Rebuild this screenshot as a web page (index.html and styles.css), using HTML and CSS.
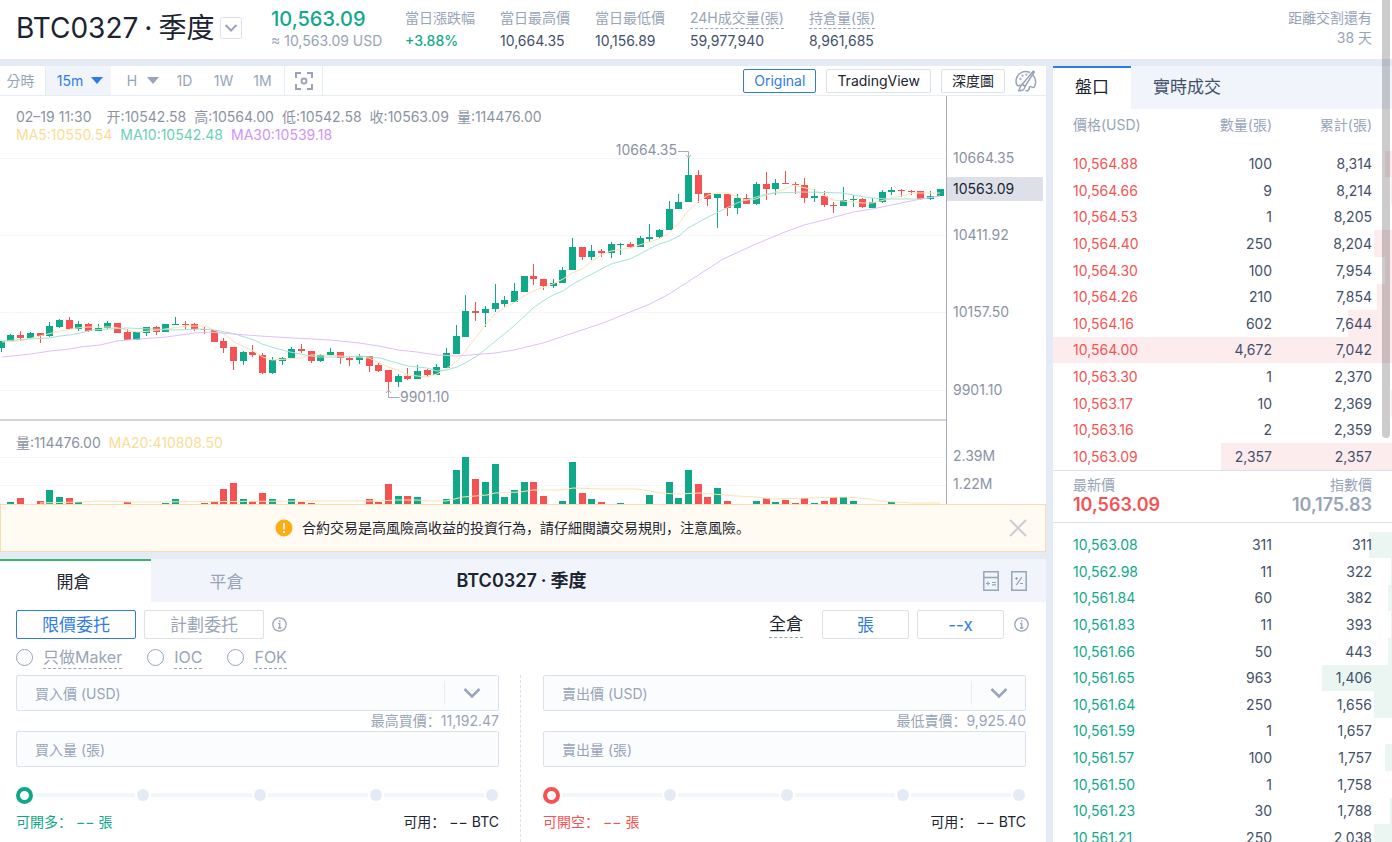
FILE: index.html
```html
<!DOCTYPE html>
<html lang="zh-Hant">
<head>
<meta charset="utf-8">
<title>BTC0327·季度</title>
<link rel="stylesheet" href="styles.css">
</head>
<body>
<div class="app">
  <header class="ticker">
    <div class="pair">
      <h1 class="pair-name">BTC0327<span class="sep">·</span>季度</h1>
      <button class="pair-toggle" aria-label="選擇合約"><svg width="14" height="10" viewBox="0 0 14 10"><path d="M1.500 2l5.500 5.500L12.500 2" fill="none" stroke="#98a4b8" stroke-width="2"/></svg></button>
    </div>
    <div class="last">
      <strong class="last-price">10,563.09</strong>
      <span class="last-usd">≈ 10,563.09 USD</span>
    </div>
    <dl class="stats">
      <div class="stat"><dt>當日漲跌幅</dt><dd class="up">+3.88%</dd></div>
      <div class="stat"><dt>當日最高價</dt><dd>10,664.35</dd></div>
      <div class="stat"><dt>當日最低價</dt><dd>10,156.89</dd></div>
      <div class="stat hint"><dt>24H成交量(張)</dt><dd>59,977,940</dd></div>
      <div class="stat hint"><dt>持倉量(張)</dt><dd>8,961,685</dd></div>
    </dl>
    <div class="delivery"><span>距離交割還有</span><span>38 天</span></div>
  </header>

  <main class="workspace">
    <div class="left">
      <section class="chart-panel">
        <nav class="toolbar">
          <button class="tf tf-line">分時</button>
          <button class="tf tf-on">15m <i class="caret"></i></button>
          <button class="tf tf-h">H <i class="caret"></i></button>
          <button class="tf">1D</button>
          <button class="tf">1W</button>
          <button class="tf">1M</button>
          <button class="tf tf-shot" aria-label="全屏"><svg width="18" height="18" viewBox="0 0 18 18" fill="none" stroke="#98a4b8" stroke-width="2"><path d="M1 6V1h5M12 1h5v5M17 12v5h-5M6 17H1v-5"/><circle cx="9" cy="9" r="2.500"/></svg></button>
          <span class="grow"></span>
          <button class="view view-on">Original</button>
          <button class="view">TradingView</button>
          <button class="view">深度圖</button>
          <button class="brush" aria-label="設置"><svg width="22" height="22" viewBox="0 0 22 22" fill="none" stroke="#98a4b8" stroke-width="1.500" stroke-linejoin="round" stroke-linecap="round"><path d="M14.500 2.300C9 .2 3.200 2.800 1.600 8c-.8 2.600-.7 5.400.6 7.200.8 1 2 .8 2.800-.2"/><path d="M18.300 5.500c2.500 3 2.800 6.800 1.600 10.200-.8 2.300-2 2.200-3.200 1.300-1.300-.9-2.500-.2-2.500 1.200 0 1.700-1.200 2.600-3.200 2.600"/><path d="M7.300 14.200L18.200 1.300c.5-.4 1.200.1 1 .7L10 16.300z"/><path d="M7.300 14.200L10 16.300c.2 2.700-2 4.600-6.400 4.400 1.700-1.500 1-5.200 3.700-6.500z"/><circle cx="5.500" cy="9" r=".4"/><circle cx="7.500" cy="5.700" r=".4"/><circle cx="11.300" cy="4.600" r=".4"/></svg></button>
        </nav>
        <div class="chart">
          <div class="plot">
            <svg id="plot" class="plot-svg" viewBox="0 0 946 408" preserveAspectRatio="xMaxYMin slice"></svg>
            <div class="legend legend-price">
              <p class="ohlc"><span>02–19 11:30</span><span>开:10542.58</span><span>高:10564.00</span><span>低:10542.58</span><span>收:10563.09</span><span>量:114476.00</span></p>
              <p class="mas"><span class="ma5">MA5:10550.54</span><span class="ma10">MA10:10542.48</span><span class="ma30">MA30:10539.18</span></p>
            </div>
            <p class="legend legend-vol"><span>量:114476.00</span><span class="ma5">MA20:410808.50</span></p>
          </div>
          <div class="axis">
            <span class="tick tick-1">10664.35</span>
            <span class="tick tick-now">10563.09</span>
            <span class="tick tick-2">10411.92</span>
            <span class="tick tick-3">10157.50</span>
            <span class="tick tick-4">9901.10</span>
            <span class="tick tick-5">2.39M</span>
            <span class="tick tick-6">1.22M</span>
          </div>
        </div>
        <div class="notice" lang="zh-Hans">
          <svg width="18" height="18" viewBox="0 0 18 18"><circle cx="9" cy="9" r="8.500" fill="#ffab12"/><path d="M8 4h2l-.3 6.500H8.300zM8 12h2v2H8z" fill="#fff"/></svg>
          <p>合約交易是高風險高收益的投資行為，請仔細閱讀交易規則，注意風險。</p>
          <button class="close" aria-label="關閉"><svg width="18" height="18" viewBox="0 0 18 18"><path d="M1 1l16 16M17 1L1 17" stroke="#c9ced8" stroke-width="2"/></svg></button>
        </div>
      </section>

      <section class="trade">
        <div class="trade-head">
          <button class="side side-on">開倉</button>
          <button class="side">平倉</button>
          <h2 class="trade-title">BTC0327<span class="sep">·</span>季度</h2>
          <button class="tool" aria-label="計算器"><svg width="16" height="20" viewBox="0 0 16 20" fill="none" stroke="#98a4b8"><path d="M.8 .8h14.400v18.400H.8zM.8 6.500h14.400" stroke-width="1.500"/><path d="M3 12.500h4M5 10.500v4M9 11.500h4M9 13.800h4" stroke-width="1.200"/></svg></button>
          <button class="tool" aria-label="費率"><svg width="16" height="20" viewBox="0 0 16 20" fill="none" stroke="#98a4b8"><path d="M.8 .8h14.400v18.400H.8z" stroke-width="1.500"/><path d="M10.800 6.200l-5.500 8M4 7.500h3M5.500 6v3M9 12.500h3" stroke-width="1.200"/></svg></button>
        </div>
        <div class="modes">
          <button class="mode mode-on">限價委托</button>
          <button class="mode">計劃委托</button>
          <button class="info" aria-label="說明"><svg width="15" height="15" viewBox="0 0 15 15" fill="none" stroke="#98a4b8"><circle cx="7.500" cy="7.500" r="6.700" stroke-width="1.300"/><path d="M6.200 6.500h1.500V11M6 11h3.400M7 4h1.400" stroke-width="1.300"/></svg></button>
          <span class="grow"></span>
          <span class="margin">全倉</span>
          <button class="lever">張</button>
          <button class="lever">--x</button>
          <button class="info info-end" aria-label="說明"><svg width="15" height="15" viewBox="0 0 15 15" fill="none" stroke="#98a4b8"><circle cx="7.500" cy="7.500" r="6.700" stroke-width="1.300"/><path d="M6.200 6.500h1.500V11M6 11h3.400M7 4h1.400" stroke-width="1.300"/></svg></button>
        </div>
        <div class="options">
          <label class="opt"><input type="radio" name="tif"><span>只做Maker</span></label>
          <label class="opt"><input type="radio" name="tif"><span>IOC</span></label>
          <label class="opt"><input type="radio" name="tif"><span>FOK</span></label>
        </div>
        <div class="forms" lang="zh-Hans">
          <form class="order buy">
            <div class="field"><input type="text" placeholder="買入價 (USD)" aria-label="買入價"><button type="button" class="field-more" aria-label="更多"><svg width="18" height="12" viewBox="0 0 18 12"><path d="M1.500 2L9 9.500 16.500 2" fill="none" stroke="#98a4b8" stroke-width="2.500"/></svg></button></div>
            <p class="limit">最高買價：11,192.47</p>
            <div class="field"><input type="text" placeholder="買入量 (張)" aria-label="買入量"></div>
            <div class="slider"><i class="knob"></i><i class="seg"></i><i class="dot"></i><i class="seg"></i><i class="dot"></i><i class="seg"></i><i class="dot"></i><i class="seg"></i><i class="dot"></i></div>
            <div class="avail"><span class="can">可開多： −− 張</span><span>可用： −− BTC</span></div>
          </form>
          <form class="order sell">
            <div class="field"><input type="text" placeholder="賣出價 (USD)" aria-label="賣出價"><button type="button" class="field-more" aria-label="更多"><svg width="18" height="12" viewBox="0 0 18 12"><path d="M1.500 2L9 9.500 16.500 2" fill="none" stroke="#98a4b8" stroke-width="2.500"/></svg></button></div>
            <p class="limit">最低賣價：9,925.40</p>
            <div class="field"><input type="text" placeholder="賣出量 (張)" aria-label="賣出量"></div>
            <div class="slider"><i class="knob"></i><i class="seg"></i><i class="dot"></i><i class="seg"></i><i class="dot"></i><i class="seg"></i><i class="dot"></i><i class="seg"></i><i class="dot"></i></div>
            <div class="avail"><span class="can">可開空： −− 張</span><span>可用： −− BTC</span></div>
          </form>
        </div>
      </section>
    </div>

    <aside class="book">
      <div class="book-tabs">
        <button class="book-tab book-tab-on">盤口</button>
        <button class="book-tab">實時成交</button>
      </div>
      <table class="levels asks">
        <thead><tr><th>價格(USD)</th><th>數量(張)</th><th>累計(張)</th></tr></thead>
        <tbody id="asks"></tbody>
      </table>
      <div class="index">
        <div><span>最新價</span><strong class="down">10,563.09</strong></div>
        <div class="index-right"><span>指數價</span><strong>10,175.83</strong></div>
      </div>
      <table class="levels bids"><tbody id="bids"></tbody></table>
    </aside>
  </main>
  <div class="scroll-thumb"></div>
</div>
<script src="app.js"></script>
</body>
</html>
```
FILE: styles.css
```css
* { box-sizing: border-box; }
body, h1, h2, p, dl, dd { margin: 0; }
body { font-family: Inter, "Noto Sans CJK SC", sans-serif; font-size: 14px; line-height: 20px; color: #1b2430; background: #e4ebf5; }
button { font: inherit; color: inherit; background: none; border: 0; padding: 0; margin: 0; display: flex; align-items: center; justify-content: center; flex: none; cursor: pointer; }
svg { display: block; flex: none; }
.grow { flex: 1; }
.app { height: 100vh; overflow: hidden; display: flex; flex-direction: column; }

.ticker { flex: none; height: 59px; background: #fff; display: flex; padding: 0 20px 0 16px; color: #98a4b8; white-space: nowrap; }
.pair { display: flex; align-items: center; gap: 6px; width: 255px; height: 55px; color: #1b2430; }
.pair-name { font-size: 28px; line-height: 36px; font-weight: 400; }
.pair-name .sep { margin: 0 6px; }
.pair-toggle { width: 22px; height: 22px; border: 1px solid #dce2f0; border-radius: 2px; }
.last { display: flex; flex-direction: column; width: 134px; padding-top: 8px; }
.last-price { font-size: 20px; line-height: 23px; font-weight: 500; color: #11a88a; }
.last-usd { font-size: 14px; line-height: 20px; }
.stats { display: flex; gap: 25px; padding-top: 8px; }
.stat dt { line-height: 20px; }
.stat dd { margin-top: 3px; line-height: 20px; color: #43506a; }
.stat .up { color: #11a88a; font-weight: 500; }
.hint dt { border-bottom: 1px dashed #98a4b8; }
.hint dd { margin-top: 2px; }
.delivery { margin-left: auto; padding-top: 8px; display: flex; flex-direction: column; text-align: right; }

.workspace { flex: 1; min-height: 0; margin-top: 7px; display: grid; grid-template-columns: minmax(0, 1fr) 339px; gap: 7px; }
.left { min-width: 0; display: flex; flex-direction: column; gap: 7px; }
.chart-panel { background: #fff; }
.toolbar { height: 30px; display: flex; align-items: center; border-bottom: 1px solid #e6edf5; color: #98a4b8; padding-right: 9px; }
.tf { height: 29px; width: 39px; gap: 8px; }
.tf-line { width: 46px; padding-right: 4px; border-right: 1px solid #e6edf5; }
.tf-on { width: 65px; padding-left: 3px; color: #2f7be5; background: #f1f5fb; }
.tf-h { width: 54px; padding-left: 10px; gap: 10px; }
.tf-shot { margin-left: 2px; border-left: 1px solid #e6edf5; border-right: 1px solid #e6edf5; }
.caret { border: 6px solid transparent; border-top: 7px solid currentColor; border-bottom: 0; }
.view { height: 24px; padding: 0 10px; margin-right: 10px; border: 1px solid #dce0e8; border-radius: 2px; color: #1b2430; }
.view-on { color: #2f7be5; border-color: #2f7be5; }

.chart { display: flex; height: 408px; color: #8b93a3; }
.plot { flex: 1; min-width: 0; position: relative; }
.plot-svg { width: 100%; height: 408px; }
.legend { position: absolute; left: 16px; white-space: nowrap; }
.legend-price { top: 12px; line-height: 18px; }
.legend-vol { top: 337px; }
.legend span { margin-right: 8px; }
.legend .ohlc span:first-child { margin-right: 15px; }
.ma5 { color: #fbdc94; }
.ma10 { color: #6bd0b8; }
.ma30 { color: #cf95fa; }
.axis { width: 100px; position: relative; border-left: 1px solid #a5abb8; }
.tick { position: absolute; left: 0; padding-left: 6px; width: 96px; line-height: 24px; }
.tick-now { top: 81px; background: #dde0e8; color: #1b2430; }
.tick-1 { top: 50px; }
.tick-2 { top: 127px; }
.tick-3 { top: 204px; }
.tick-4 { top: 282px; }
.tick-5 { top: 348px; }
.tick-6 { top: 376px; }
.note { font-size: 14px; fill: #8b93a3; }

.notice { height: 48px; display: flex; align-items: center; gap: 9px; padding: 0 18px 0 274px; background: #fffbf3; border: 1px solid #f8dcb4; }
.notice p { flex: 1; }

.trade { flex: 1; background: #fff; }
.trade-head { display: flex; height: 43px; align-items: center; background: #f1f5fb; padding-right: 19px; }
.side { width: 151px; height: 43px; font-size: 17px; color: #98a4b8; border-top: 2px solid transparent; }
.side-on { color: #1b2430; background: #fff; border-color: #3cb371; padding-right: 4px; }
.trade-title { flex: 1; text-align: center; font-size: 18px; font-weight: 600; padding-right: 230px; }
.trade-title .sep { margin: 0 4px; }
.tool { margin-left: 12px; }
.modes { display: flex; align-items: center; padding: 8px 17px 0 16px; gap: 8px; }
.mode { width: 120px; height: 29px; border: 1px solid #dce0e8; border-radius: 2px; font-size: 17px; color: #98a4b8; }
.mode-on { color: #2f7be5; border-color: #2f7be5; }
.margin { font-size: 17px; line-height: 26px; margin-right: 11px; border-bottom: 1px dashed #98a4b8; }
.lever { width: 87px; height: 29px; border: 1px solid #dce0e8; border-radius: 2px; font-size: 17px; color: #2f7be5; }
.info-end { margin-left: 2px; }
.options { display: flex; gap: 25px; padding: 6px 16px 0; height: 36px; font-size: 16px; color: #98a4b8; }
.opt { display: flex; gap: 10px; height: 24px; align-items: center; }
.opt input { appearance: none; width: 17px; height: 17px; margin: 0; border: 1px solid #98a4b8; border-radius: 50%; }
.opt span { line-height: 22px; border-bottom: 1px dashed #98a4b8; }
.forms { display: grid; grid-template-columns: 1fr 1fr; padding: 0 20px 0 16px; }
.order.buy { padding-right: 21px; border-right: 1px dashed #dce0e8; }
.order.sell { padding-left: 22px; }
.field { display: flex; align-items: center; height: 36px; border: 1px solid #dce0e8; border-radius: 2px; background: #fbfcfe; }
.field input { flex: 1; min-width: 0; height: 34px; border: 0; background: none; padding: 0 18px; font: inherit; }
.field input::placeholder { color: #98a4b8; }
.field-more { width: 54px; height: 24px; border-left: 1px solid #e6edf5; }
.limit { text-align: right; line-height: 20px; color: #98a4b8; }
.slider { display: flex; align-items: center; gap: 2px; height: 18px; margin-top: 19px; padding-right: 1px; }
.knob { width: 17px; height: 17px; border: 4px solid #11a88a; border-radius: 50%; }
.sell .knob { border-color: #f55353; }
.dot { width: 12px; height: 12px; border-radius: 50%; background: #e4ebf5; }
.seg { flex: 1; height: 4px; background: #f1f6f9; }
.avail { display: flex; justify-content: space-between; margin-top: 8px; padding-bottom: 20px; }
.can { color: #11a88a; }
.sell .can { color: #f55353; }

.book { background: #fff; min-height: 0; overflow: hidden; }
.book-tabs { display: flex; height: 43px; background: #f1f5fb; font-size: 17px; color: #43506a; }
.book-tab { padding: 0 22px 4px; border-top: 2px solid transparent; }
.book-tab-on { background: #fff; color: #1b2430; border-color: #2f7be5; }
.levels { width: 100%; border-collapse: collapse; table-layout: fixed; color: #43506a; }
.levels th { height: 33px; padding: 0 0 1px; font-weight: 400; color: #98a4b8; text-align: right; }
.levels td { padding: 0; text-align: right; line-height: 20px; }
.levels th:first-child, .levels td:first-child { text-align: left; padding-left: 20px; }
.levels th:last-child, .levels td:last-child { padding-right: 20px; }
.levels th:nth-child(2), .levels td:nth-child(2) { padding-right: 7px; }
.levels tr { height: 26px; }
.asks thead::after { content: ""; display: block; height: 9px; }
.asks tbody { --tint: #fdecee; }
.bids tbody { --tint: #ebf6f3; }
.levels tbody tr { background: linear-gradient(to left, var(--tint) var(--depth), transparent var(--depth)); }
.levels tbody tr:nth-child(5n+2), .levels tbody tr:nth-child(5n+4), .levels tbody tr:nth-child(5n+5) { height: 27px; }
.asks td:first-child, .down { color: #f55353; }
.bids td:first-child { color: #11a88a; }
.index { display: flex; justify-content: space-between; height: 53px; padding: 4px 20px 0; border: solid #dce0e8; border-width: 1px 0; margin-bottom: 9px; color: #98a4b8; }
.index span, .index strong { display: block; line-height: 20px; }
.index strong { font-size: 18px; font-weight: 600; }
.index-right { text-align: right; }
.scroll-thumb { position: fixed; right: 2px; top: -8px; width: 8px; height: 446px; border-radius: 4px; background: rgba(0, 0, 0, .2); }
```
FILE: app.js
```js
// Candles: [direction, open/close top, open/close bottom, high, low, volume]
const candles = [
[1,341,348,341,352,0],[1,335,341,334,342,2],[0,335,338,331,341,6],[1,333,338,332,338,0],[0,333,336,333,343,3],
[1,326,336,322,337,14],[1,320,327,319,328,7],[0,320,329,317,330,6],[1,324,329,321,331,2],[0,324,331,323,332,0],
[1,328,331,324,331,0],[1,323,328,321,329,0],[0,323,333,323,333,0],[0,332,340,329,340,2],[1,332,340,332,340,0],
[1,327,333,327,336,0],[0,327,332,326,335,0],[1,324,332,324,332,1],[1,324,325,317,325,5],[0,324,325,321,329,0],
[0,324,329,323,331,0],[0,329,330,327,334,1],[0,330,342,330,342,3],[0,341,348,338,353,15],[0,347,361,347,370,21],
[1,352,361,351,365,5],[0,352,355,345,357,3],[0,355,373,353,374,11],[1,360,373,357,374,5],[1,358,361,357,365,0],
[1,349,358,347,358,5],[0,349,351,344,353,2],[0,351,361,351,363,1],[1,355,361,354,362,0],[1,352,355,348,356,0],
[0,352,358,352,364,0],[0,358,360,356,366,0],[1,356,360,354,364,0],[0,356,366,356,372,5],[0,365,371,363,372,2],
[0,370,382,370,390,20],[1,376,382,374,387,8],[0,376,379,368,380,8],[1,371,379,365,379,7],[0,370,375,369,377,0],
[1,367,375,364,375,0],[1,353,368,348,368,5],[1,336,354,325,354,34],[1,311,337,295,337,47],[0,311,313,302,321,25],
[1,309,313,306,327,22],[1,303,309,284,312,40],[1,300,304,296,307,7],[1,291,302,283,302,14],[1,276,292,276,292,22],
[0,276,279,264,285,22],[0,279,286,279,290,8],[1,283,286,279,288,0],[1,270,283,267,283,3],[1,247,270,238,270,42],
[0,247,257,247,260,11],[1,251,257,245,260,5],[0,251,253,249,257,2],[1,244,253,242,258,0],[1,244,245,243,255,1],
[0,244,247,242,248,0],[1,238,247,236,247,0],[1,237,239,224,242,9],[1,230,237,229,238,0],[1,209,230,201,230,22],
[1,202,209,194,209,6],[1,175,202,158,202,34],[0,175,194,170,203,20],[0,193,199,193,206,7],[1,194,198,194,228,16],
[0,194,208,194,216,3],[1,198,208,194,214,0],[0,198,204,194,204,0],[1,184,204,182,205,3],[0,184,189,172,200,6],
[1,183,189,179,195,2],[0,183,184,171,184,4],[0,184,185,182,194,1],[0,185,198,178,203,6],[1,196,198,189,202,1],
[0,196,205,191,207,3],[0,205,206,202,213,7],[1,200,206,187,206,7],[1,199,200,195,207,3],[0,199,207,198,208,0],
[1,202,208,198,208,0],[1,192,202,190,203,0],[1,190,192,187,195,2],[0,190,191,189,197,0],[0,191,192,190,195,0],
[0,191,199,191,200,0],[1,196,199,191,200,0],[1,189,196,189,196,0]];
const lines = [
['#fbe3b0','2,342 20,341 40,336 60,331 77,328 88,327 113,327 137,332 150,331 173,328 187,326 205,326 214,330 224,334 234,342 253,351 263,357 272,360 302,358 311,355 321,355 340,356 359,357 369,358 388,367 398,370 408,375 427,377 437,374 446,369 457,361 466,350 477,336 487,323 495,314 505,307 514,303 524,296 533,291 553,284 563,279 572,273 582,269 592,261 601,255 611,251 630,248 649,242 659,239 669,233 679,223 688,211 698,202 708,195 717,193 727,193 746,200 756,199 766,195 785,189 793,185 814,190 833,200 843,201 863,203 872,203 901,196 913,193 940,193'],
['#a5e2d5','2,341 30,339 50,338 60,336 70,335 80,333 92,330 108,329 127,328 175,330 200,329 215,330 235,334 254,340 262,344 275,348 290,352 305,355 318,357 345,357 360,356 380,358 390,361 408,366 427,368 437,371 447,370 457,367 467,362 477,356 487,348 514,326 533,308 543,301 553,295 563,291 573,284 592,274 611,264 630,259 640,254 649,249 659,244 669,241 679,236 688,228 708,217 737,203 746,200 763,195 775,193 803,192 843,193 853,195 872,198 887,199 921,199 940,196'],
['#dfc0fb','2,357 31,354 50,351 70,349 80,347 100,345 117,341 127,340 166,337 195,333 210,332 233,334 260,336 293,338 330,340 359,343 379,346 398,350 417,352 437,355 457,356 495,353 514,350 543,343 573,333 603,323 650,304 669,294 700,274 723,259 756,244 785,232 804,225 824,220 853,212 872,209 901,203 921,199 940,196'],
['#fbe3b0','40,503 77,502 100,501 133,502 320,501 377,501 397,500 417,500 430,501 446,501 463,497 487,495 495,493 520,492 533,490 563,490 573,488 603,489 637,489 650,491 660,493 677,494 700,493 737,496 757,497 770,499 847,497 870,499 880,501 913,503 940,503']];
const top0 = 96;
const step = 939 / 97;
const colors = ['#f55353', '#11a88a'];
let out = '';
for (const y of [158, 235, 312, 390, 457, 485]) out += `<path d="M0 ${y - top0 + .5}H946" stroke="#f4f5f8"/>`;
candles.forEach(([up, a, b, hi, lo, vol], i) => {
  const x = Math.floor(1.3 + i * step);
  const c = colors[up];
  out += `<path d="M${x + .5} ${hi - top0}V${lo - top0}" stroke="${c}"/><rect x="${x - 3}" y="${a - top0}" width="7" height="${b - a}" fill="${c}"/>`;
  if (vol) out += `<rect x="${x - 3}" y="${408 - vol}" width="7" height="${vol}" fill="${c}"/>`;
});
for (const [c, pts] of lines) out += `<polyline transform="translate(0 ${-top0})" points="${pts}" fill="none" stroke="${c}"/>`;
out += '<path d="M0 324H946" stroke="#c3c7d1" stroke-width="1.500"/>';
out += '<path d="M678 55.500h10.500v6M686 59l2.500 3 2.500-3M388.500 294v7.500h11M386 297l2.500-3 2.500 3" fill="none" stroke="#a5abb8"/>';
out += '<text class="note" x="677" y="59" text-anchor="end">10664.35</text><text class="note" x="400" y="306">9901.10</text>';
document.getElementById('plot').innerHTML = out;

const asks = [['10,564.88',100,8314],['10,564.66',9,8214],['10,564.53',1,8205],['10,564.40',250,8204],['10,564.30',100,7954],['10,564.26',210,7854],['10,564.16',602,7644],['10,564.00',4672,7042],['10,563.30',1,2370],['10,563.17',10,2369],['10,563.16',2,2359],['10,563.09',2357,2357]];
const bids = [['10,563.08',311,311],['10,562.98',11,322],['10,561.84',60,382],['10,561.83',11,393],['10,561.66',50,443],['10,561.65',963,1406],['10,561.64',250,1656],['10,561.59',1,1657],['10,561.57',100,1757],['10,561.50',1,1758],['10,561.23',30,1788],['10,561.21',250,2038]];
const rows = list => list.map(([p, q, s]) => `<tr style="--depth:${(q / 46.72).toFixed(1)}%"><td>${p}</td><td>${q.toLocaleString('en-US')}</td><td>${s.toLocaleString('en-US')}</td></tr>`).join('');
document.getElementById('asks').innerHTML = rows(asks);
document.getElementById('bids').innerHTML = rows(bids);
```
